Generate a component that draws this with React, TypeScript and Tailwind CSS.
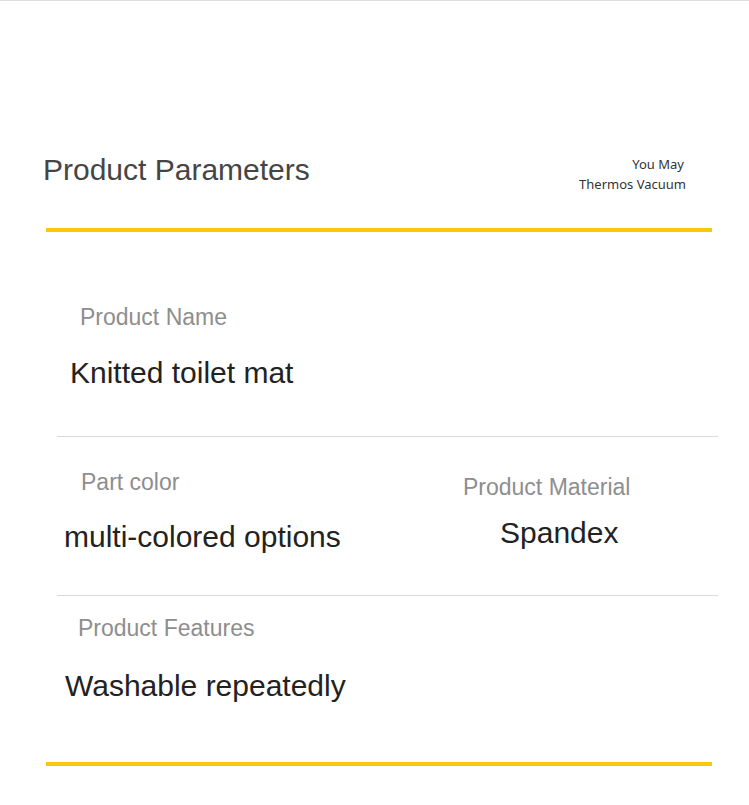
import React from 'react';

const sans = "font-['Liberation_Sans',Arial,sans-serif]";

const Label: React.FC<{ text: string; className?: string }> = ({ text, className = '' }) => (
  <div className={`text-[23px] leading-none text-[#8e8e8e] whitespace-nowrap ${className}`}>{text}</div>
);

const Value: React.FC<{ text: string; className?: string }> = ({ text, className = '' }) => (
  <div className={`text-[30px] leading-none text-[#222] whitespace-nowrap ${className}`}>{text}</div>
);

export default function App() {
  return (
    <div className={`w-[749px] h-[805px] bg-white border-t border-[#dedede] ${sans}`}>
      {/* header */}
      <div className="flex items-start justify-between pt-[154px] pl-[43px] pr-[63px]">
        <h1 className="text-[30px] leading-none text-[#454545] whitespace-nowrap">Product Parameters</h1>
        <div className="text-right text-[13px] leading-[20px] text-[#333] font-['Noto_Sans',sans-serif] -mt-[1px]">
          <div className="pr-[2px]">You May</div>
          <div>Thermos Vacuum</div>
        </div>
      </div>
      <div className="ml-[46px] mt-[34px] w-[666px] h-[4px] bg-[#fac80b]"></div>

      {/* product name */}
      <Label text="Product Name" className="mt-[74px] ml-[80px]" />
      <Value text="Knitted toilet mat" className="mt-[29px] ml-[70px]" />
      <div className="ml-[57px] mt-[48px] w-[661px] h-px bg-[#d9d9d9]"></div>

      {/* color + material */}
      <div className="flex">
        <div className="w-[463px]">
          <Label text="Part color" className="mt-[34px] ml-[81px]" />
          <Value text="multi-colored options" className="mt-[28px] ml-[64px]" />
        </div>
        <div>
          <Label text="Product Material" className="mt-[39px]" />
          <Value text="Spandex" className="mt-[19px] ml-[37px]" />
        </div>
      </div>
      <div className="ml-[57px] mt-[43px] w-[661px] h-px bg-[#d9d9d9]"></div>

      {/* features */}
      <Label text="Product Features" className="mt-[21px] ml-[78px]" />
      <Value text="Washable repeatedly" className="mt-[31px] ml-[65px]" />
      <div className="ml-[46px] mt-[61px] w-[666px] h-[4px] bg-[#fac80b]"></div>
    </div>
  );
}
